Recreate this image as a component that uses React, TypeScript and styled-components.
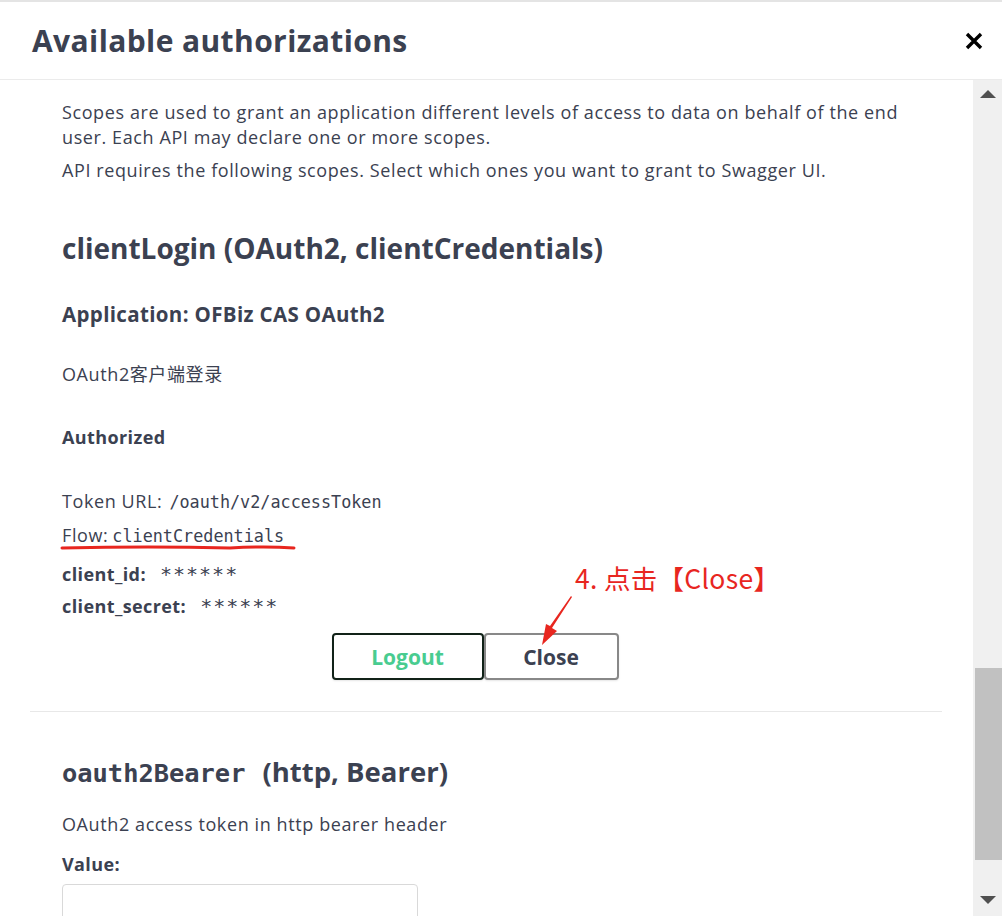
import React from "react";
import styled, { createGlobalStyle } from "styled-components";

const Global = createGlobalStyle`
  html, body { margin: 0; padding: 0; background: #fff; }
  body { font-family: "Open Sans", "Noto Sans CJK SC", sans-serif; color: #3b4151; }
  * { box-sizing: border-box; }
`;

const Modal = styled.div`
  position: relative;
  width: 1002px;
  height: 916px;
  display: flex;
  flex-direction: column;
  overflow: hidden;
  background: #fff;
`;

const Header = styled.div`
  height: 80px;
  flex: none;
  display: flex;
  align-items: center;
  justify-content: space-between;
  padding: 0 18px 0 32px;
  border-top: 2px solid #e4e4e4;
  border-bottom: 1px solid #ebebeb;
`;

const Title = styled.h3`
  margin: 0;
  font-size: 30px;
  letter-spacing: 0.4px;
  font-weight: 700;
  color: #3b4151;
`;

const CloseIcon = styled.button`
  border: 0;
  background: none;
  padding: 0;
  width: 20px;
  height: 20px;
  display: flex;
  align-items: center;
  justify-content: center;
`;

const Body = styled.div`
  flex: 1;
  display: flex;
  min-height: 0;
`;

const Content = styled.div`
  flex: 1;
  padding: 20px 31px 0 30px;
  overflow: hidden;
`;

const Section = styled.div<{ $last?: boolean }>`
  padding: 0 32px ${(p) => (p.$last ? "0" : "31px")};
  border-bottom: ${(p) => (p.$last ? "none" : "1px solid #e8e8e8")};
`;

const Text = styled.p<{ $mt?: number; $bold?: boolean }>`
  margin: ${(p) => p.$mt ?? 0}px 0 0;
  font-size: 18px;
  letter-spacing: ${(p) => (p.$bold ? "0.4px" : "0.6px")};
  line-height: 25px;
  font-weight: ${(p) => (p.$bold ? 700 : 400)};
`;

const Heading = styled.h4<{ $mt: number }>`
  margin: ${(p) => p.$mt}px 0 0;
  font-size: 28px;
  line-height: 36px;
  font-weight: 700;
`;

const SubHeading = styled.h5`
  margin: 34px 0 0;
  font-size: 20.5px;
  letter-spacing: 0.35px;
  line-height: 28px;
  font-weight: 700;
`;

const Code = styled.code<{ $gap?: number }>`
  font-family: "DejaVu Sans Mono", monospace;
  font-size: 16.8px;
  letter-spacing: 0;
  margin-left: ${(p) => p.$gap ?? 7}px;
`;

const Stars = styled.span`
  font-family: "DejaVu Sans Mono", monospace;
  font-size: 20px;
  font-weight: 400;
  margin-left: 14px;
  letter-spacing: 1px;
`;

const Buttons = styled.div`
  margin-top: 14px;
  display: flex;
  justify-content: center;
  padding-right: 22px;
`;

const Btn = styled.button<{ $primary?: boolean }>`
  height: 47px;
  width: ${(p) => (p.$primary ? "152px" : "135px")};
  border: 2px solid ${(p) => (p.$primary ? "#112218" : "#888")};
  border-radius: 4px;
  background: #fff;
  font-family: "Open Sans", sans-serif;
  font-size: 21px;
  font-weight: 700;
  color: ${(p) => (p.$primary ? "#49cc90" : "#3b4151")};
  box-shadow: 0 1px 2px rgba(0, 0, 0, 0.1);
`;

const BearerTitle = styled.h4`
  margin: 43px 0 0;
  font-size: 27.5px;
  line-height: 34px;
  font-weight: 700;
  display: flex;
  align-items: baseline;
  gap: 17px;
`;

const Mono = styled.span`
  font-family: "DejaVu Sans Mono", monospace;
  font-size: 25.4px;
`;

const Input = styled.input`
  display: block;
  margin-top: 7px;
  width: 356px;
  height: 44px;
  border: 1px solid #d9d9d9;
  border-radius: 4px;
`;

const Scrollbar = styled.div`
  width: 29px;
  flex: none;
  background: #f0f0f0;
  display: flex;
  flex-direction: column;
  align-items: center;
  padding: 10px 0 12px;
`;

const Arrow = styled.div<{ $down?: boolean }>`
  width: 0;
  height: 0;
  border-left: 8px solid transparent;
  border-right: 8px solid transparent;
  ${(p) =>
    p.$down ? "border-top: 8px solid #505050;" : "border-bottom: 8px solid #505050;"}
`;

const Track = styled.div`
  flex: 1;
  width: 100%;
  padding: 570px 0 36px 2px;
  display: flex;
`;

const Thumb = styled.div`
  flex: 1;
  background: #c1c1c1;
`;

const Annotation = styled.div`
  position: absolute;
  left: 575px;
  top: 561px;
  color: #e8261f;
  font-family: "Noto Sans CJK SC", sans-serif;
  font-size: 26.5px;
  letter-spacing: 0.3px;
  line-height: 34px;
`;

const Overlay = styled.svg`
  position: absolute;
  left: 0;
  top: 0;
  pointer-events: none;
`;

export default function App() {
  return (
    <Modal>
      <Global />
      <Header>
        <Title>Available authorizations</Title>
        <CloseIcon aria-label="close">
          <svg width="18" height="18" viewBox="0 0 18 18">
            <path d="M2 2 L16 16 M16 2 L2 16" stroke="#000" strokeWidth="3.4" />
          </svg>
        </CloseIcon>
      </Header>
      <Body>
        <Content>
          <Section>
            <Text>
              Scopes are used to grant an application different levels of access to data on behalf of the end
              user. Each API may declare one or more scopes.
            </Text>
            <Text $mt={8}>API requires the following scopes. Select which ones you want to grant to Swagger UI.</Text>
            <Heading $mt={47}>clientLogin (OAuth2, clientCredentials)</Heading>
            <SubHeading>Application: OFBiz CAS OAuth2</SubHeading>
            <Text $mt={34}>OAuth2客户端登录</Text>
            <Text $mt={38} $bold>Authorized</Text>
            <Text $mt={39}>
              Token URL:<Code>/oauth/v2/accessToken</Code>
            </Text>
            <Text $mt={8}>
              Flow:<Code $gap={4}>clientCredentials</Code>
            </Text>
            <Text $mt={13} $bold>
              client_id:<Stars>******</Stars>
            </Text>
            <Text $mt={7} $bold>
              client_secret:<Stars>******</Stars>
            </Text>
            <Buttons>
              <Btn $primary>Logout</Btn>
              <Btn>Close</Btn>
            </Buttons>
          </Section>
          <Section $last>
            <BearerTitle>
              <Mono>oauth2Bearer</Mono>
              <span>(http, Bearer)</span>
            </BearerTitle>
            <Text $mt={22}>OAuth2 access token in http bearer header</Text>
            <Text $mt={15} $bold>Value:</Text>
            <Input />
          </Section>
        </Content>
        <Scrollbar>
          <Arrow />
          <Track>
            <Thumb />
          </Track>
          <Arrow $down />
        </Scrollbar>
      </Body>
      <Annotation>4. 点击【Close】</Annotation>
      <Overlay width="1002" height="916" viewBox="0 0 1002 916">
        <path d="M62 548 Q150 546 230 548 Q265 546 294 548" stroke="#e8261f" strokeWidth="3" fill="none" strokeLinecap="round" />
        <path d="M572 597 L552 628 L557 631 L542 645 L546 624 L550 626 L571 596 Z" fill="#e8261f" />
      </Overlay>
    </Modal>
  );
}
